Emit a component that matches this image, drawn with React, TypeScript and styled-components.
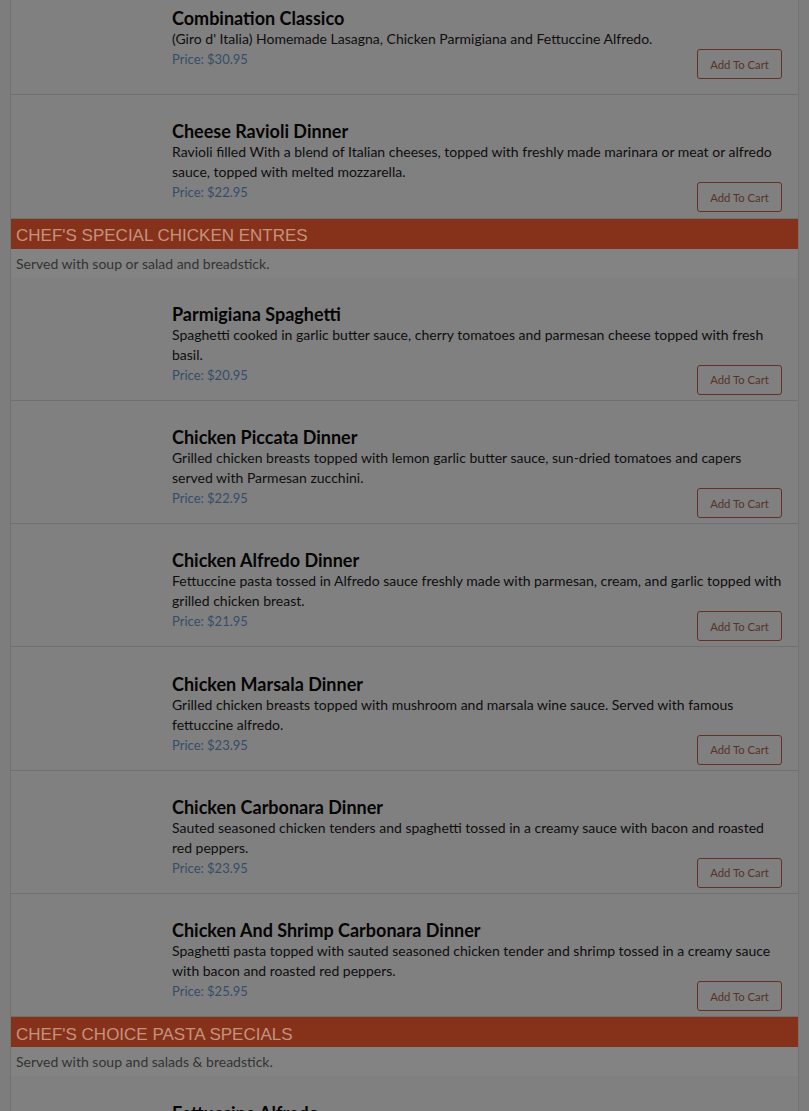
import React from "react";
import styled, { createGlobalStyle } from "styled-components";

const Global = createGlobalStyle`
  html, body { margin: 0; padding: 0; background: #808080; overflow: hidden; }
  body { font-family: Lato, "Source Sans Pro", "Noto Sans", sans-serif; }
`;

const Page = styled.div`
  height: 1111px;
  overflow: hidden;
  padding: 0 10px 0 10px;
  background: #7d7d7d;
`;

const Container = styled.div`
  margin-top: -28px;
  background: #808080;
  border-left: 1px solid #727272;
  border-right: 1px solid #727272;
`;

const Row = styled.div`
  display: grid;
  grid-template-columns: 161px 1fr;
  min-height: 122.3px;
  border-bottom: 1px solid #707070;
  align-items: center;
`;

const Thumb = styled.div`
  height: 100px;
`;

const Body = styled.div`
  padding: 20px 16px 0 0;
`;

const Title = styled.div`
  font-size: 18px;
  font-weight: 700;
  line-height: 22px;
  color: #050505;
`;

const Desc = styled.div`
  font-size: 14px;
  line-height: 20px;
  color: #0e0e0e;
`;

const Footer = styled.div`
  display: flex;
  justify-content: space-between;
  align-items: flex-start;
`;

const Price = styled.div`
  font-size: 13px;
  line-height: 20px;
  color: #364d69;
`;

const CartButton = styled.button`
  height: 30px;
  width: 85px;
  padding: 0;
  border: 1px solid #633126;
  border-radius: 3px;
  background: transparent;
  color: #573327;
  font-family: inherit;
  font-size: 11.3px;
`;

const SectionHead = styled.div`
  background: #86321a;
  height: 30px;
  display: flex;
  align-items: center;
  padding: 5px 5px 0;
  box-sizing: border-box;
  font-family: "Liberation Sans", Arial, sans-serif;
  font-size: 17px;
  color: #c4927f;
  text-transform: uppercase;
`;

const SectionNote = styled.div`
  background: #838383;
  height: 29px;
  display: flex;
  align-items: center;
  padding: 0 5px;
  font-size: 14px;
  color: #333333;
`;

type Item = { name: string; desc: string; price: string };

const first: Item[] = [
  {
    name: "Combination Classico",
    desc: "(Giro d' Italia) Homemade Lasagna, Chicken Parmigiana and Fettuccine Alfredo.",
    price: "$30.95",
  },
  {
    name: "Cheese Ravioli Dinner",
    desc: "Ravioli filled With a blend of Italian cheeses, topped with freshly made marinara or meat or alfredo sauce, topped with melted mozzarella.",
    price: "$22.95",
  },
];

const chicken: Item[] = [
  {
    name: "Parmigiana Spaghetti",
    desc: "Spaghetti cooked in garlic butter sauce, cherry tomatoes and parmesan cheese topped with fresh basil.",
    price: "$20.95",
  },
  {
    name: "Chicken Piccata Dinner",
    desc: "Grilled chicken breasts topped with lemon garlic butter sauce, sun-dried tomatoes and capers served with Parmesan zucchini.",
    price: "$22.95",
  },
  {
    name: "Chicken Alfredo Dinner",
    desc: "Fettuccine pasta tossed in Alfredo sauce freshly made with parmesan, cream, and garlic topped with grilled chicken breast.",
    price: "$21.95",
  },
  {
    name: "Chicken Marsala Dinner",
    desc: "Grilled chicken breasts topped with mushroom and marsala wine sauce. Served with famous fettuccine alfredo.",
    price: "$23.95",
  },
  {
    name: "Chicken Carbonara Dinner",
    desc: "Sauted seasoned chicken tenders and spaghetti tossed in a creamy sauce with bacon and roasted red peppers.",
    price: "$23.95",
  },
  {
    name: "Chicken And Shrimp Carbonara Dinner",
    desc: "Spaghetti pasta topped with sauted seasoned chicken tender and shrimp tossed in a creamy sauce with bacon and roasted red peppers.",
    price: "$25.95",
  },
];

const pasta: Item[] = [
  {
    name: "Fettuccine Alfredo",
    desc: "Fettuccine pasta tossed in Alfredo sauce freshly made with parmesan, cream, and garlic, finished with fresh parsley and served with garlic bread.",
    price: "$17.95",
  },
];

const MenuRow = ({ item }: { item: Item }) => (
  <Row>
    <Thumb />
    <Body>
      <Title>{item.name}</Title>
      <Desc>{item.desc}</Desc>
      <Footer>
        <Price>Price: {item.price}</Price>
        <CartButton>Add To Cart</CartButton>
      </Footer>
    </Body>
  </Row>
);

export default function App() {
  return (
    <>
      <Global />
      <Page>
        <Container>
          {first.map((i) => (
            <MenuRow key={i.name} item={i} />
          ))}
          <SectionHead>Chef's Special Chicken Entres</SectionHead>
          <SectionNote>Served with soup or salad and breadstick.</SectionNote>
          {chicken.map((i) => (
            <MenuRow key={i.name} item={i} />
          ))}
          <SectionHead>Chef's Choice Pasta Specials</SectionHead>
          <SectionNote>Served with soup and salads &amp; breadstick.</SectionNote>
          {pasta.map((i) => (
            <MenuRow key={i.name} item={i} />
          ))}
        </Container>
      </Page>
    </>
  );
}
